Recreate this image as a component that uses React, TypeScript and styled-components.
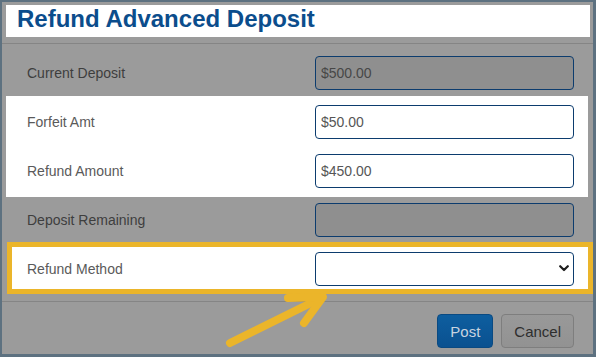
import React, { FC } from 'react';
import styled, { createGlobalStyle } from 'styled-components';

const GlobalStyle = createGlobalStyle`
  html, body {
    margin: 0;
    padding: 0;
    background: #ffffff;
  }
`;

const colors = {
  frame: '#5d7180',
  overlay: '#9b9b9b',
  divider: '#858585',
  title: '#0b4d8c',
  inputBorder: '#0c3c6e',
  mutedInput: '#8f8f8f',
  highlight: '#ebb52a',
};

const Frame = styled.div`
  position: relative;
  width: 596px;
  height: 357px;
  box-sizing: border-box;
  border-style: solid;
  border-color: ${colors.frame};
  border-width: 2px 3px 3px 2px;
  background: ${colors.overlay};
  display: flex;
  flex-direction: column;
  font-family: 'Liberation Sans', Arial, sans-serif;
  overflow: hidden;
`;

const Header = styled.div`
  margin: 3px 3px 0 4px;
  height: 32px;
  padding-left: 11px;
  background: #ffffff;
`;

const Title = styled.h1`
  margin: 0;
  font-size: 24px;
  line-height: 28px;
  font-weight: 700;
  color: ${colors.title};
`;

const Divider = styled.div<{ $top: number }>`
  margin-top: ${(p) => p.$top}px;
  height: 1px;
  background: ${colors.divider};
`;

const Body = styled.div`
  display: flex;
  flex-direction: column;
  padding-top: 12px;
`;

const WhiteGroup = styled.div`
  display: flex;
  flex-direction: column;
  gap: 15px;
  margin: 6px 5px 0 4px;
  padding: 9px 0;
  background: #ffffff;
`;

const HighlightBox = styled.div`
  margin: 5px 0 0 5px;
  border: 5px solid ${colors.highlight};
  padding: 5px 0 3px;
  background: #ffffff;
`;

const Row = styled.div<{ $gap?: number }>`
  display: grid;
  grid-template-columns: 1fr 259px;
  align-items: center;
  margin-top: ${(p) => p.$gap ?? 0}px;
  padding: 0 19px 0 25px;

  ${WhiteGroup} & {
    padding: 0 14px 0 21px;
  }

  ${HighlightBox} & {
    padding: 0 14px 0 15px;
  }
`;

const Label = styled.label<{ $onWhite?: boolean }>`
  font-size: 14px;
  color: ${(p) => (p.$onWhite ? '#5a5a5a' : '#3e3e3e')};
`;

const Field = styled.input<{ $muted?: boolean }>`
  width: 259px;
  height: 34px;
  box-sizing: border-box;
  margin: 0;
  padding: 0 5px;
  border: 1px solid ${colors.inputBorder};
  border-radius: 4px;
  background: ${(p) => (p.$muted ? colors.mutedInput : '#ffffff')};
  color: ${(p) => (p.$muted ? '#474747' : '#565656')};
  font-family: 'Liberation Sans', Arial, sans-serif;
  font-size: 14px;
  outline: none;
`;

const SelectWrap = styled.div`
  position: relative;
  width: 259px;
  height: 34px;
`;

const Select = styled.select`
  appearance: none;
  width: 100%;
  height: 100%;
  box-sizing: border-box;
  margin: 0;
  padding: 0 5px;
  border: 1px solid ${colors.inputBorder};
  border-radius: 4px;
  background: #ffffff;
  font-family: 'Liberation Sans', Arial, sans-serif;
  font-size: 14px;
  outline: none;
`;

const Chevron = styled.svg`
  position: absolute;
  right: 5px;
  top: 13px;
  pointer-events: none;
`;

const Footer = styled.div`
  display: flex;
  justify-content: flex-end;
  gap: 8px;
  padding: 12px 19px 0 0;
`;

const Button = styled.button<{ $primary?: boolean }>`
  height: 34px;
  padding: 0 12px;
  border-radius: 4px;
  border: 1px solid ${(p) => (p.$primary ? '#0a4a82' : '#7e7e7e')};
  background: ${(p) =>
    p.$primary
      ? 'linear-gradient(#0e5e9f, #0a5190)'
      : 'linear-gradient(#999999, #929292)'};
  color: ${(p) => (p.$primary ? '#c8d4e0' : '#2e2e2e')};
  font-family: 'Liberation Sans', Arial, sans-serif;
  font-size: 15px;
`;

const Pointer = styled.svg`
  position: absolute;
  left: 218px;
  top: 283px;
  pointer-events: none;
`;

const App: FC = () => (
  <>
    <GlobalStyle />
    <Frame>
      <Header>
        <Title>Refund Advanced Deposit</Title>
      </Header>
      <Divider $top={6} />

      <Body>
        <Row>
          <Label>Current Deposit</Label>
          <Field $muted readOnly defaultValue="$500.00" />
        </Row>

        <WhiteGroup>
          <Row>
            <Label $onWhite>Forfeit Amt</Label>
            <Field readOnly defaultValue="$50.00" />
          </Row>
          <Row>
            <Label $onWhite>Refund Amount</Label>
            <Field readOnly defaultValue="$450.00" />
          </Row>
        </WhiteGroup>

        <Row $gap={6}>
          <Label>Deposit Remaining</Label>
          <Field $muted readOnly defaultValue="" />
        </Row>

        <HighlightBox>
          <Row>
            <Label $onWhite>Refund Method</Label>
            <SelectWrap>
              <Select defaultValue="">
                <option value="" />
              </Select>
              <Chevron width="10" height="7" viewBox="0 0 10 7">
                <path
                  d="M1.2 1.2 L5 5 L8.8 1.2"
                  fill="none"
                  stroke="#1e1e1e"
                  strokeWidth="2.2"
                  strokeLinecap="round"
                  strokeLinejoin="round"
                />
              </Chevron>
            </SelectWrap>
          </Row>
        </HighlightBox>
      </Body>

      <Divider $top={7} />

      <Footer>
        <Button $primary>Post</Button>
        <Button>Cancel</Button>
      </Footer>

      <Pointer width="110" height="66" viewBox="0 0 110 66">
        <g
          fill="none"
          stroke={colors.highlight}
          strokeWidth="8"
          strokeLinecap="round"
          strokeLinejoin="round"
        >
          <line x1="10" y1="58" x2="101" y2="13" />
          <polyline points="68,13 103,12 84,38" />
        </g>
      </Pointer>
    </Frame>
  </>
);

export default App;
